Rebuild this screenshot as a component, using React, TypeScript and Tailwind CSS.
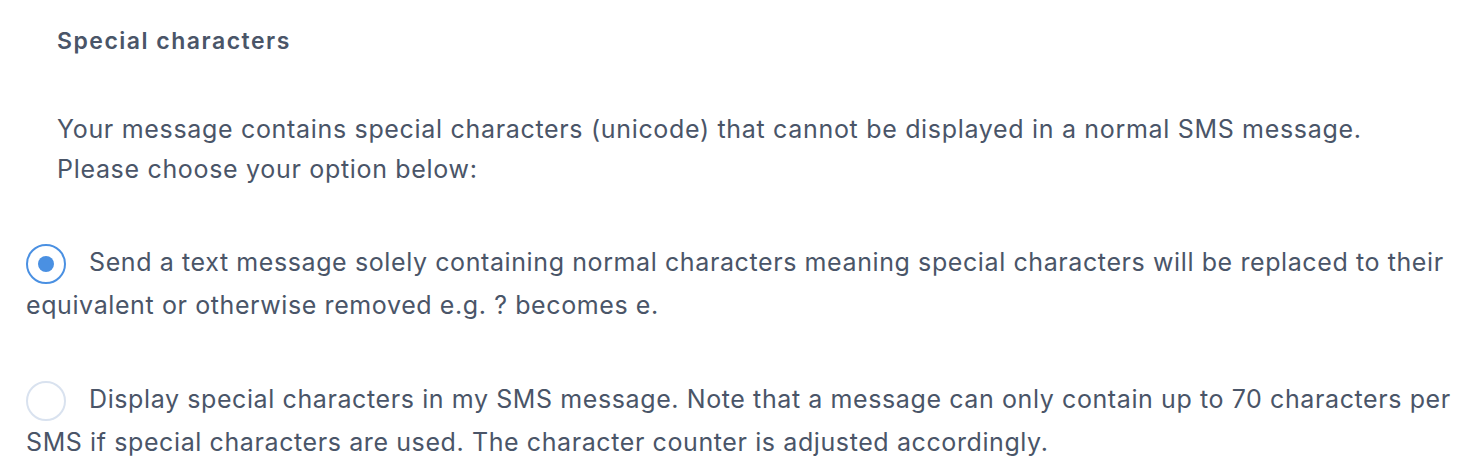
export default function App() {
  return (
    <div className="w-[1470px] h-[474px] bg-white text-[#4a5568] font-['Inter',sans-serif] overflow-hidden">
      <div className="pl-[57px] pt-[26px]">
        <h2 className="text-[23px] font-semibold leading-[30px] tracking-[1.5px]">Special characters</h2>
        <p className="mt-[53px] text-[25px] leading-[40px] tracking-[0.68px]">
          Your message contains special characters (unicode) that cannot be displayed in a normal SMS message.
          <br />
          Please choose your option below:
        </p>
      </div>
      <div className="pl-[26px] mt-[52px] text-[25px] leading-[43px] tracking-[0.6px]">
        <label className="block">
          <span className="inline-flex align-middle -my-[10px] mr-[23px] h-[40px] w-[40px] items-center justify-center rounded-full border-2 border-[#4a90e2]">
            <span className="h-[16px] w-[16px] rounded-full bg-[#4a90e2]" />
          </span>
          Send a text message solely containing normal characters meaning special characters will be replaced to their
          equivalent or otherwise removed e.g. ? becomes e.
        </label>
        <label className="block mt-[51px]">
          <span className="inline-block align-middle -my-[10px] mr-[23px] h-[40px] w-[40px] rounded-full border-2 border-[#d9e2ef]" />
          Display special characters in my SMS message. Note that a message can only contain up to 70 characters per
          SMS if special characters are used. The character counter is adjusted accordingly.
        </label>
      </div>
    </div>
  )
}
